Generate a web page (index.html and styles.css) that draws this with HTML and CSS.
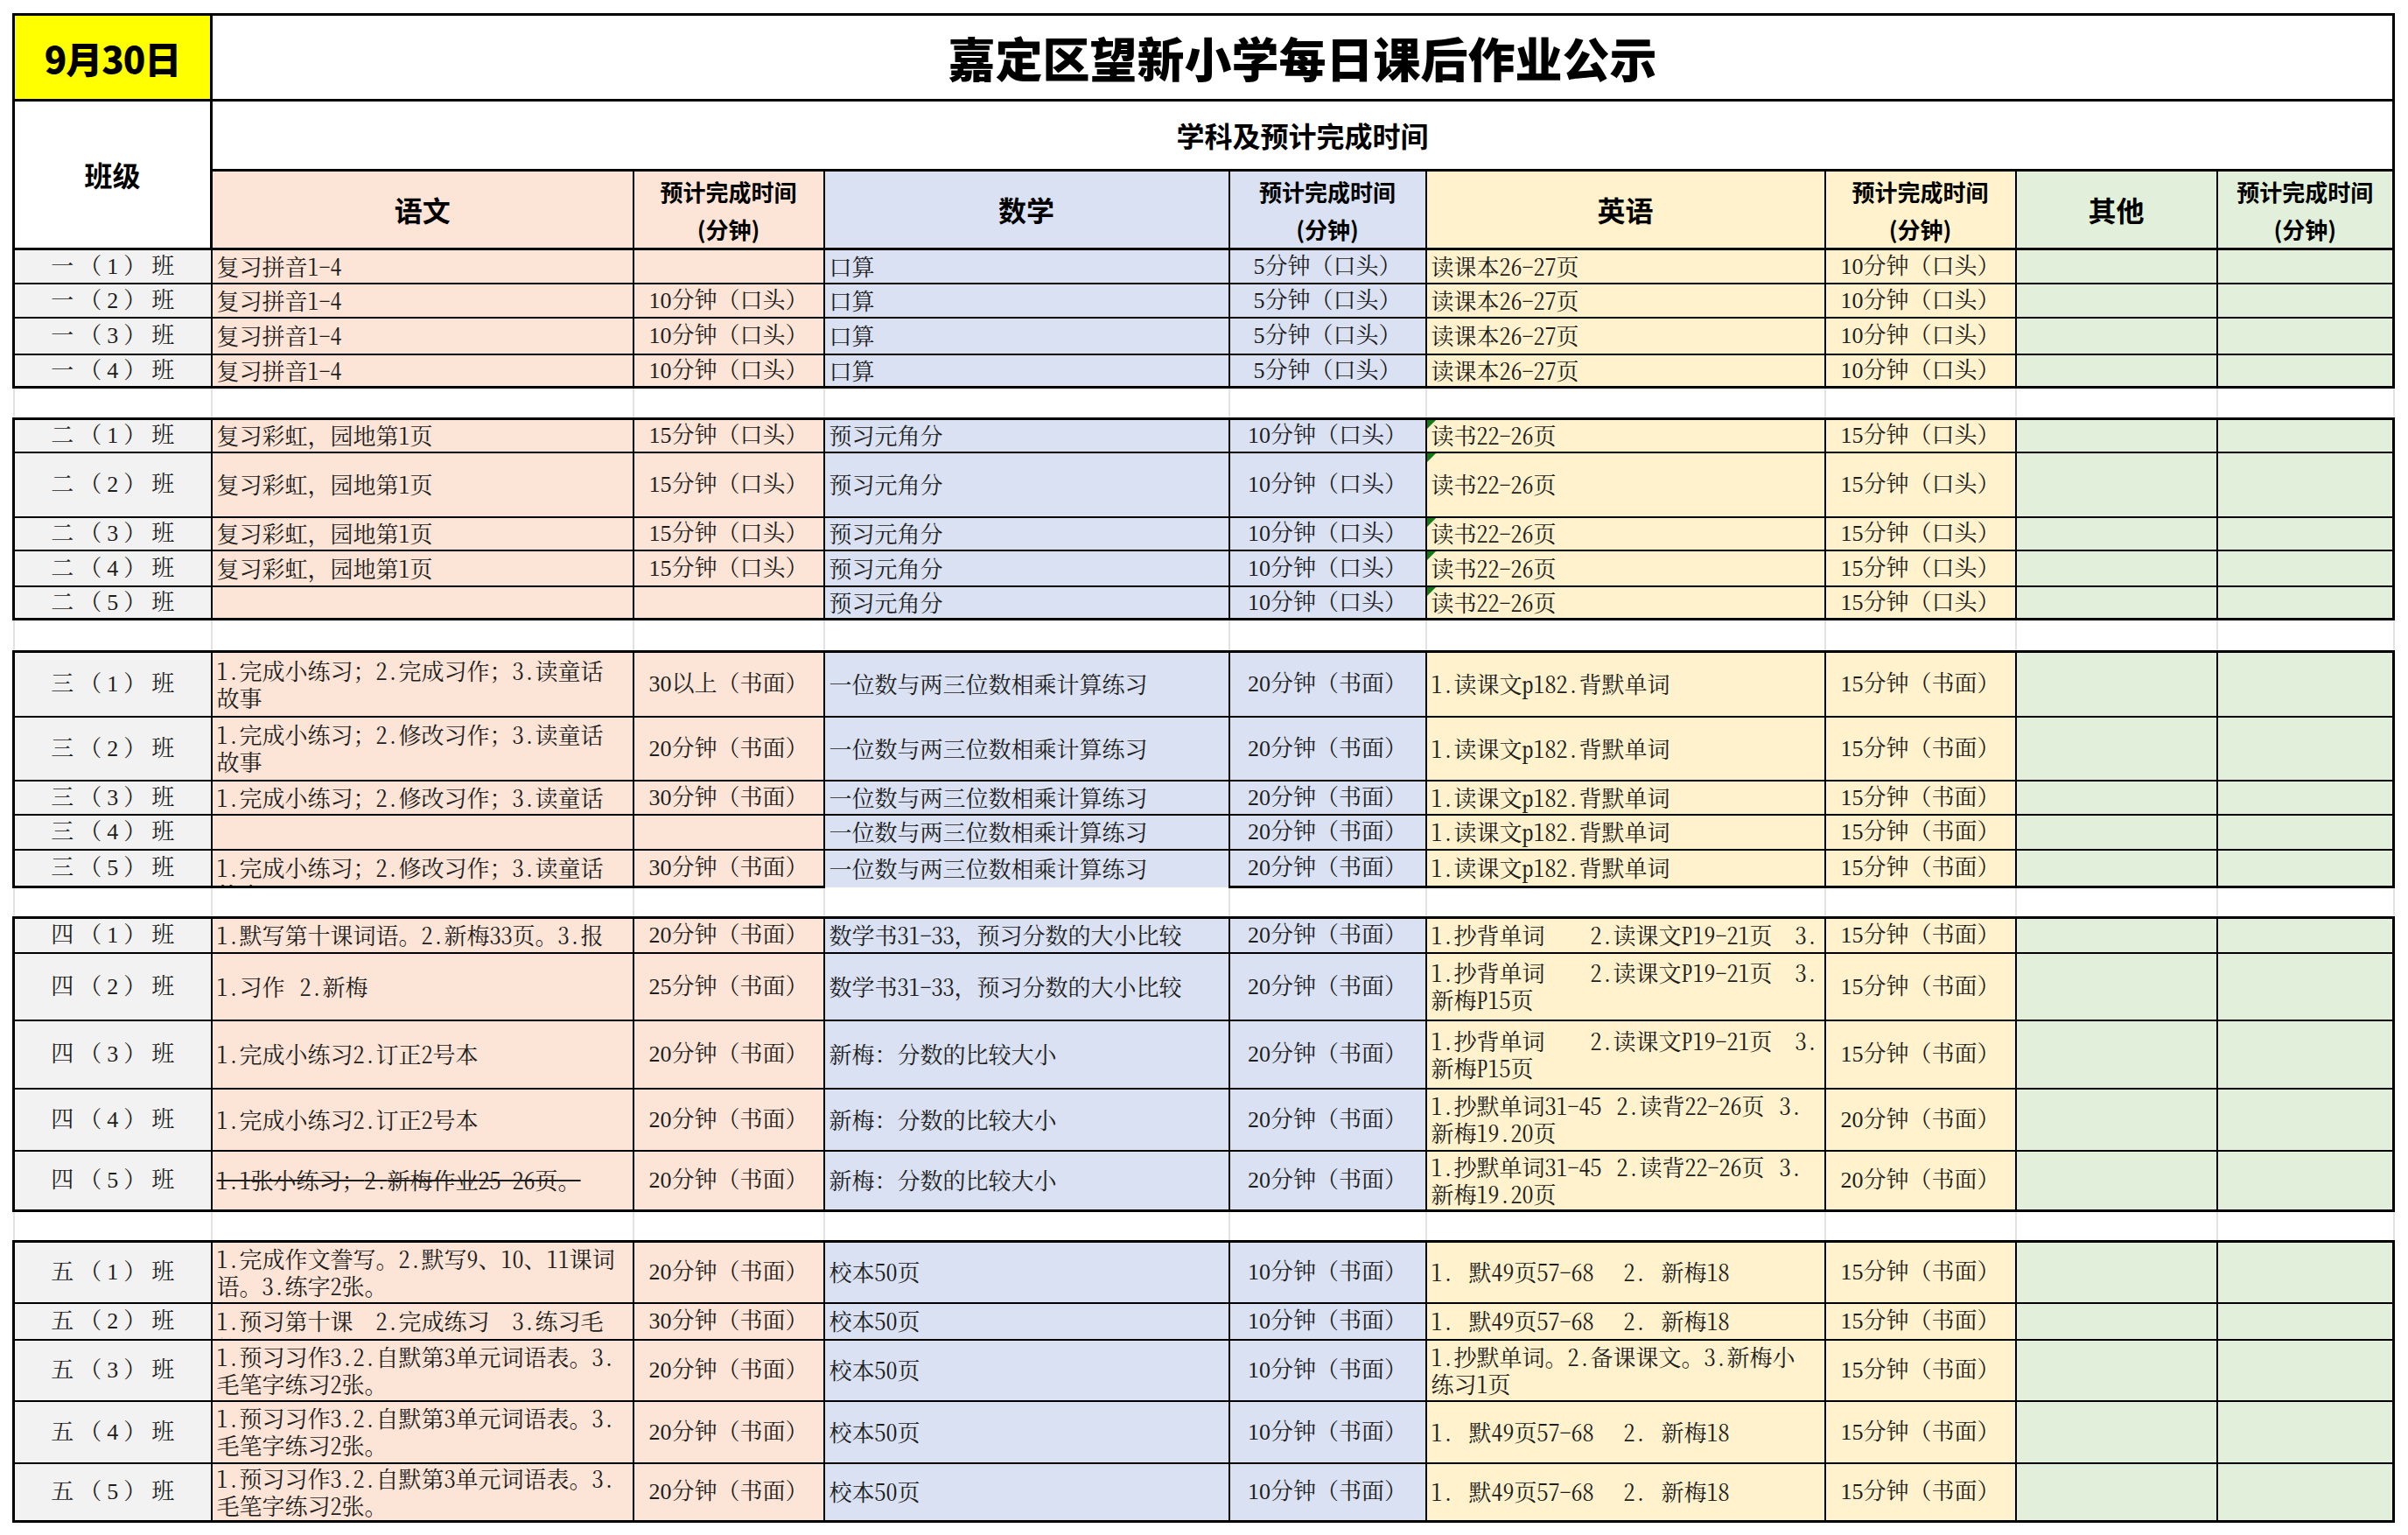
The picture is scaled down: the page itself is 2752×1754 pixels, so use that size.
FILE: index.html
```html
<!DOCTYPE html>
<html lang="zh-CN">
<head>
<meta charset="utf-8">
<title>嘉定区望新小学每日课后作业公示</title>
<link rel="stylesheet" href="styles.css">
</head>
<body>
<table class="sheet">
<colgroup>
<col class="w-cls"><col class="w-yw"><col class="w-t1"><col class="w-sx"><col class="w-t2"><col class="w-yy"><col class="w-t3"><col class="w-qt"><col class="w-t4">
</colgroup>
<thead>
<tr class="h98"><th class="date">9月30日</th><th class="title" colspan="8">嘉定区望新小学每日课后作业公示</th></tr>
<tr class="h80"><th class="cls-head" rowspan="2">班级</th><th class="sub" colspan="8">学科及预计完成时间</th></tr>
<tr class="h90 hdr">
<th class="subj yw">语文</th><th class="tmh yw">预计完成时间<br>(分钟)</th>
<th class="subj sx">数学</th><th class="tmh sx">预计完成时间<br>(分钟)</th>
<th class="subj yy">英语</th><th class="tmh yy">预计完成时间<br>(分钟)</th>
<th class="subj qt">其他</th><th class="tmh qt">预计完成时间<br>(分钟)</th>
</tr>
</thead>

<tbody class="blk">
<tr class="h39"><td class="cls">一（1）班</td><td class="txt yw">复习拼音<span class="n">1-4</span></td><td class="tm yw"></td><td class="txt sx">口算</td><td class="tm sx">5分钟（口头）</td><td class="txt yy">读课本<span class="n">26-27</span>页</td><td class="tm yy">10分钟（口头）</td><td class="qt"></td><td class="qt"></td></tr>
<tr class="h39"><td class="cls">一（2）班</td><td class="txt yw">复习拼音<span class="n">1-4</span></td><td class="tm yw">10分钟（口头）</td><td class="txt sx">口算</td><td class="tm sx">5分钟（口头）</td><td class="txt yy">读课本<span class="n">26-27</span>页</td><td class="tm yy">10分钟（口头）</td><td class="qt"></td><td class="qt"></td></tr>
<tr class="h42"><td class="cls">一（3）班</td><td class="txt yw">复习拼音<span class="n">1-4</span></td><td class="tm yw">10分钟（口头）</td><td class="txt sx">口算</td><td class="tm sx">5分钟（口头）</td><td class="txt yy">读课本<span class="n">26-27</span>页</td><td class="tm yy">10分钟（口头）</td><td class="qt"></td><td class="qt"></td></tr>
<tr class="h38"><td class="cls">一（4）班</td><td class="txt yw">复习拼音<span class="n">1-4</span></td><td class="tm yw">10分钟（口头）</td><td class="txt sx">口算</td><td class="tm sx">5分钟（口头）</td><td class="txt yy">读课本<span class="n">26-27</span>页</td><td class="tm yy">10分钟（口头）</td><td class="qt"></td><td class="qt"></td></tr>
</tbody>

<tbody class="gap"><tr class="h36"><td></td><td></td><td></td><td></td><td></td><td></td><td></td><td></td><td></td></tr></tbody>

<tbody class="blk">
<tr class="h38"><td class="cls">二（1）班</td><td class="txt yw">复习彩虹，园地第<span class="n">1</span>页</td><td class="tm yw">15分钟（口头）</td><td class="txt sx">预习元角分</td><td class="tm sx">10分钟（口头）</td><td class="txt yy tri">读书<span class="n">22-26</span>页</td><td class="tm yy">15分钟（口头）</td><td class="qt"></td><td class="qt"></td></tr>
<tr class="h74"><td class="cls">二（2）班</td><td class="txt yw">复习彩虹，园地第<span class="n">1</span>页</td><td class="tm yw">15分钟（口头）</td><td class="txt sx">预习元角分</td><td class="tm sx">10分钟（口头）</td><td class="txt yy tri">读书<span class="n">22-26</span>页</td><td class="tm yy">15分钟（口头）</td><td class="qt"></td><td class="qt"></td></tr>
<tr class="h38"><td class="cls">二（3）班</td><td class="txt yw">复习彩虹，园地第<span class="n">1</span>页</td><td class="tm yw">15分钟（口头）</td><td class="txt sx">预习元角分</td><td class="tm sx">10分钟（口头）</td><td class="txt yy tri">读书<span class="n">22-26</span>页</td><td class="tm yy">15分钟（口头）</td><td class="qt"></td><td class="qt"></td></tr>
<tr class="h41"><td class="cls">二（4）班</td><td class="txt yw">复习彩虹，园地第<span class="n">1</span>页</td><td class="tm yw">15分钟（口头）</td><td class="txt sx">预习元角分</td><td class="tm sx">10分钟（口头）</td><td class="txt yy tri">读书<span class="n">22-26</span>页</td><td class="tm yy">15分钟（口头）</td><td class="qt"></td><td class="qt"></td></tr>
<tr class="h38"><td class="cls">二（5）班</td><td class="txt yw"></td><td class="tm yw"></td><td class="txt sx">预习元角分</td><td class="tm sx">10分钟（口头）</td><td class="txt yy tri">读书<span class="n">22-26</span>页</td><td class="tm yy">15分钟（口头）</td><td class="qt"></td><td class="qt"></td></tr>
</tbody>

<tbody class="gap"><tr class="h37"><td></td><td></td><td></td><td></td><td></td><td></td><td></td><td></td><td></td></tr></tbody>

<tbody class="blk">
<tr class="h74"><td class="cls">三（1）班</td><td class="txt yw"><span class="n">1.</span>完成小练习；<span class="n">2.</span>完成习作；<span class="n">3.</span>读童话<br>故事</td><td class="tm yw">30以上（书面）</td><td class="txt sx">一位数与两三位数相乘计算练习</td><td class="tm sx">20分钟（书面）</td><td class="txt yy"><span class="n">1.</span>读课文<span class="n">p182.</span>背默单词</td><td class="tm yy">15分钟（书面）</td><td class="qt"></td><td class="qt"></td></tr>
<tr class="h73"><td class="cls">三（2）班</td><td class="txt yw"><span class="n">1.</span>完成小练习；<span class="n">2.</span>修改习作；<span class="n">3.</span>读童话<br>故事</td><td class="tm yw">20分钟（书面）</td><td class="txt sx">一位数与两三位数相乘计算练习</td><td class="tm sx">20分钟（书面）</td><td class="txt yy"><span class="n">1.</span>读课文<span class="n">p182.</span>背默单词</td><td class="tm yy">15分钟（书面）</td><td class="qt"></td><td class="qt"></td></tr>
<tr class="h39"><td class="cls">三（3）班</td><td class="txt yw"><span class="n">1.</span>完成小练习；<span class="n">2.</span>修改习作；<span class="n">3.</span>读童话</td><td class="tm yw">30分钟（书面）</td><td class="txt sx">一位数与两三位数相乘计算练习</td><td class="tm sx">20分钟（书面）</td><td class="txt yy"><span class="n">1.</span>读课文<span class="n">p182.</span>背默单词</td><td class="tm yy">15分钟（书面）</td><td class="qt"></td><td class="qt"></td></tr>
<tr class="h40"><td class="cls">三（4）班</td><td class="txt yw"></td><td class="tm yw"></td><td class="txt sx">一位数与两三位数相乘计算练习</td><td class="tm sx">20分钟（书面）</td><td class="txt yy"><span class="n">1.</span>读课文<span class="n">p182.</span>背默单词</td><td class="tm yy">15分钟（书面）</td><td class="qt"></td><td class="qt"></td></tr>
<tr class="h43"><td class="cls">三（5）班</td><td class="txt yw peek"><div class="peek-in p40"><span class="n">1.</span>完成小练习；<span class="n">2.</span>修改习作；<span class="n">3.</span>读童话<br>故事</div></td><td class="tm yw">30分钟（书面）</td><td class="txt sx nobot">一位数与两三位数相乘计算练习</td><td class="tm sx">20分钟（书面）</td><td class="txt yy"><span class="n">1.</span>读课文<span class="n">p182.</span>背默单词</td><td class="tm yy">15分钟（书面）</td><td class="qt"></td><td class="qt"></td></tr>
</tbody>

<tbody class="gap"><tr class="h35"><td></td><td></td><td></td><td></td><td></td><td></td><td></td><td></td><td></td></tr></tbody>

<tbody class="blk">
<tr class="h40"><td class="cls">四（1）班</td><td class="txt yw"><span class="n">1.</span>默写第十课词语。<span class="n">2.</span>新梅<span class="n">33</span>页。<span class="n">3.</span>报</td><td class="tm yw">20分钟（书面）</td><td class="txt sx">数学书<span class="n">31-33</span>，预习分数的大小比较</td><td class="tm sx">20分钟（书面）</td><td class="txt yy"><span class="n">1.</span>抄背单词　　<span class="n">2.</span>读课文<span class="n">P19-21</span>页　<span class="n">3.</span></td><td class="tm yy">15分钟（书面）</td><td class="qt"></td><td class="qt"></td></tr>
<tr class="h77"><td class="cls">四（2）班</td><td class="txt yw"><span class="n">1.</span>习作<span class="n"> 2.</span>新梅</td><td class="tm yw">25分钟（书面）</td><td class="txt sx">数学书<span class="n">31-33</span>，预习分数的大小比较</td><td class="tm sx">20分钟（书面）</td><td class="txt yy"><span class="n">1.</span>抄背单词　　<span class="n">2.</span>读课文<span class="n">P19-21</span>页　<span class="n">3.</span><br>新梅<span class="n">P15</span>页</td><td class="tm yy">15分钟（书面）</td><td class="qt"></td><td class="qt"></td></tr>
<tr class="h78"><td class="cls">四（3）班</td><td class="txt yw"><span class="n">1.</span>完成小练习<span class="n">2.</span>订正<span class="n">2</span>号本</td><td class="tm yw">20分钟（书面）</td><td class="txt sx">新梅：分数的比较大小</td><td class="tm sx">20分钟（书面）</td><td class="txt yy"><span class="n">1.</span>抄背单词　　<span class="n">2.</span>读课文<span class="n">P19-21</span>页　<span class="n">3.</span><br>新梅<span class="n">P15</span>页</td><td class="tm yy">15分钟（书面）</td><td class="qt"></td><td class="qt"></td></tr>
<tr class="h71"><td class="cls">四（4）班</td><td class="txt yw"><span class="n">1.</span>完成小练习<span class="n">2.</span>订正<span class="n">2</span>号本</td><td class="tm yw">20分钟（书面）</td><td class="txt sx">新梅：分数的比较大小</td><td class="tm sx">20分钟（书面）</td><td class="txt yy"><span class="n">1.</span>抄默单词<span class="n">31-45 2.</span>读背<span class="n">22-26</span>页<span class="n"> 3.</span><br>新梅<span class="n">19.20</span>页</td><td class="tm yy">20分钟（书面）</td><td class="qt"></td><td class="qt"></td></tr>
<tr class="h69"><td class="cls">四（5）班</td><td class="txt yw"><span class="strike"><span class="n">1.1</span>张小练习；<span class="n">2.</span>新梅作业<span class="n">25-26</span>页。</span></td><td class="tm yw">20分钟（书面）</td><td class="txt sx">新梅：分数的比较大小</td><td class="tm sx">20分钟（书面）</td><td class="txt yy"><span class="n">1.</span>抄默单词<span class="n">31-45 2.</span>读背<span class="n">22-26</span>页<span class="n"> 3.</span><br>新梅<span class="n">19.20</span>页</td><td class="tm yy">20分钟（书面）</td><td class="qt"></td><td class="qt"></td></tr>
</tbody>

<tbody class="gap"><tr class="h35"><td></td><td></td><td></td><td></td><td></td><td></td><td></td><td></td><td></td></tr></tbody>

<tbody class="blk">
<tr class="h70"><td class="cls">五（1）班</td><td class="txt yw"><span class="n">1.</span>完成作文誊写。<span class="n">2.</span>默写<span class="n">9</span>、<span class="n">10</span>、<span class="n">11</span>课词<br>语。<span class="n">3.</span>练字<span class="n">2</span>张。</td><td class="tm yw">20分钟（书面）</td><td class="txt sx">校本<span class="n">50</span>页</td><td class="tm sx">10分钟（书面）</td><td class="txt yy"><span class="n">1. </span>默<span class="n">49</span>页<span class="n">57-68  2. </span>新梅<span class="n">18</span></td><td class="tm yy">15分钟（书面）</td><td class="qt"></td><td class="qt"></td></tr>
<tr class="h42"><td class="cls">五（2）班</td><td class="txt yw peek"><div class="peek-in p39"><span class="n">1.</span>预习第十课　<span class="n">2.</span>完成练习　<span class="n">3.</span>练习毛<br>笔字</div></td><td class="tm yw">30分钟（书面）</td><td class="txt sx">校本<span class="n">50</span>页</td><td class="tm sx">10分钟（书面）</td><td class="txt yy"><span class="n">1. </span>默<span class="n">49</span>页<span class="n">57-68  2. </span>新梅<span class="n">18</span></td><td class="tm yy">15分钟（书面）</td><td class="qt"></td><td class="qt"></td></tr>
<tr class="h70"><td class="cls">五（3）班</td><td class="txt yw"><span class="n">1.</span>预习习作<span class="n">3.2.</span>自默第<span class="n">3</span>单元词语表。<span class="n">3.</span><br>毛笔字练习<span class="n">2</span>张。</td><td class="tm yw">20分钟（书面）</td><td class="txt sx">校本<span class="n">50</span>页</td><td class="tm sx">10分钟（书面）</td><td class="txt yy"><span class="n">1.</span>抄默单词。<span class="n">2.</span>备课课文。<span class="n">3.</span>新梅小<br>练习<span class="n">1</span>页</td><td class="tm yy">15分钟（书面）</td><td class="qt"></td><td class="qt"></td></tr>
<tr class="h71"><td class="cls">五（4）班</td><td class="txt yw"><span class="n">1.</span>预习习作<span class="n">3.2.</span>自默第<span class="n">3</span>单元词语表。<span class="n">3.</span><br>毛笔字练习<span class="n">2</span>张。</td><td class="tm yw">20分钟（书面）</td><td class="txt sx">校本<span class="n">50</span>页</td><td class="tm sx">10分钟（书面）</td><td class="txt yy"><span class="n">1. </span>默<span class="n">49</span>页<span class="n">57-68  2. </span>新梅<span class="n">18</span></td><td class="tm yy">15分钟（书面）</td><td class="qt"></td><td class="qt"></td></tr>
<tr class="h66"><td class="cls">五（5）班</td><td class="txt yw"><span class="n">1.</span>预习习作<span class="n">3.2.</span>自默第<span class="n">3</span>单元词语表。<span class="n">3.</span><br>毛笔字练习<span class="n">2</span>张。</td><td class="tm yw">20分钟（书面）</td><td class="txt sx">校本<span class="n">50</span>页</td><td class="tm sx">10分钟（书面）</td><td class="txt yy"><span class="n">1. </span>默<span class="n">49</span>页<span class="n">57-68  2. </span>新梅<span class="n">18</span></td><td class="tm yy">15分钟（书面）</td><td class="qt"></td><td class="qt"></td></tr>
</tbody>
</table>
</body>
</html>
```

FILE: styles.css
```css
html, body {
  margin: 0;
  padding: 0;
  background: #ffffff;
}

body {
  width: 2752px;
  min-height: 1754px;
}

.sheet {
  border-collapse: collapse;
  table-layout: fixed;
  width: 2720px;
  margin: 15px 0 0 14px;
  font-family: "Liberation Serif", "Noto Serif CJK SC", "Noto Sans CJK SC", serif;
  font-size: 26px;
  line-height: 31px;
  color: #1e1e1e;
}

/* half-width Latin runs, as in a SimSun cell */
.n {
  font-family: "Noto Serif CJK SC", "Liberation Serif", serif;
  font-feature-settings: "hwid" 1;
  word-spacing: 4px;
}

/* column widths */
.w-cls { width: 226px; }
.w-yw  { width: 482px; }
.w-t1  { width: 218px; }
.w-sx  { width: 463px; }
.w-t2  { width: 225px; }
.w-yy  { width: 456px; }
.w-t3  { width: 218px; }
.w-qt  { width: 230px; }
.w-t4  { width: 202px; }

/* row heights */
.h35 { height: 35px; }
.h36 { height: 36px; }
.h37 { height: 37px; }
.h38 { height: 38px; }
.h39 { height: 39px; }
.h40 { height: 40px; }
.h41 { height: 41px; }
.h42 { height: 42px; }
.h43 { height: 43px; }
.h66 { height: 66px; }
.h69 { height: 69px; }
.h70 { height: 70px; }
.h71 { height: 71px; }
.h73 { height: 73px; }
.h74 { height: 74px; }
.h77 { height: 77px; }
.h78 { height: 78px; }
.h80 { height: 80px; }
.h90 { height: 90px; }
.h98 { height: 98px; }

.sheet th,
.sheet td {
  padding: 0;
  border: 2px solid #000;
  overflow: hidden;
  white-space: pre;
  vertical-align: middle;
}

/* header */
.sheet thead th {
  font-family: "Noto Sans CJK SC", "Liberation Sans", sans-serif;
  font-weight: 700;
  text-align: center;
  color: #000;
  background: #ffffff;
  white-space: nowrap;
  overflow: visible;
}

.sheet thead .date {
  background: #ffff00;
  font-size: 42px;
  font-weight: 900;
  letter-spacing: -1px;
  border-width: 3px;
}

.sheet thead .title {
  font-size: 54px;
  font-weight: 900;
  border-width: 3px;
}

.sheet thead .cls-head {
  font-size: 32px;
  border-width: 3px;
}

.sheet thead .sub {
  font-size: 32px;
  border-width: 3px;
}

.sheet thead .subj {
  font-size: 32px;
}

.sheet thead .tmh {
  font-size: 26px;
  line-height: 43px;
}

.sheet .hdr th {
  border-bottom-width: 3px;
}

.sheet .hdr th:last-child {
  border-right-width: 3px;
}

/* subject colours */
.sheet .yw { background: #fce4d6; }
.sheet .sx { background: #d9e1f2; }
.sheet .yy { background: #fff2cc; }
.sheet .qt { background: #e2efda; }

/* body cells */
.sheet .cls {
  background: #f2f2f2;
  text-align: center;
  letter-spacing: 6px;
  padding-left: 6px;
  overflow: visible;
}

.sheet .txt {
  font-family: "Noto Serif CJK SC", "Noto Sans CJK SC", serif;
  text-align: left;
  padding-left: 5px;
  padding-bottom: 2px;
}

.sheet .tm {
  text-align: center;
  overflow: visible;
}

.blk tr:first-child > td { border-top-width: 3px; }
.blk tr:last-child > td { border-bottom-width: 3px; }
.blk td:first-child { border-left-width: 3px; }
.blk td:last-child { border-right-width: 3px; }

.blk tr:last-child > .nobot {
  border-bottom-style: none;
}

/* blank separator rows */
.sheet .gap td {
  background: #ffffff;
  border-top-style: none;
  border-bottom-style: none;
  border-left: 2px solid #e2e2e2;
  border-right: 2px solid #e2e2e2;
}

/* wrapped text that overflows the row */
.sheet .peek {
  vertical-align: top;
  padding-bottom: 0;
}

.peek-in {
  box-sizing: border-box;
  overflow: hidden;
  padding-top: 3px;
}

.p40 { height: 40px; }
.p39 { height: 39px; }

.strike {
  text-decoration: line-through;
  text-decoration-thickness: 2px;
}

/* excel "number stored as text" marker */
.sheet .tri {
  position: relative;
}

.sheet .tri::before {
  content: "";
  position: absolute;
  left: 0;
  top: 0;
  border-top: 10px solid #157a15;
  border-right: 10px solid transparent;
}
```
